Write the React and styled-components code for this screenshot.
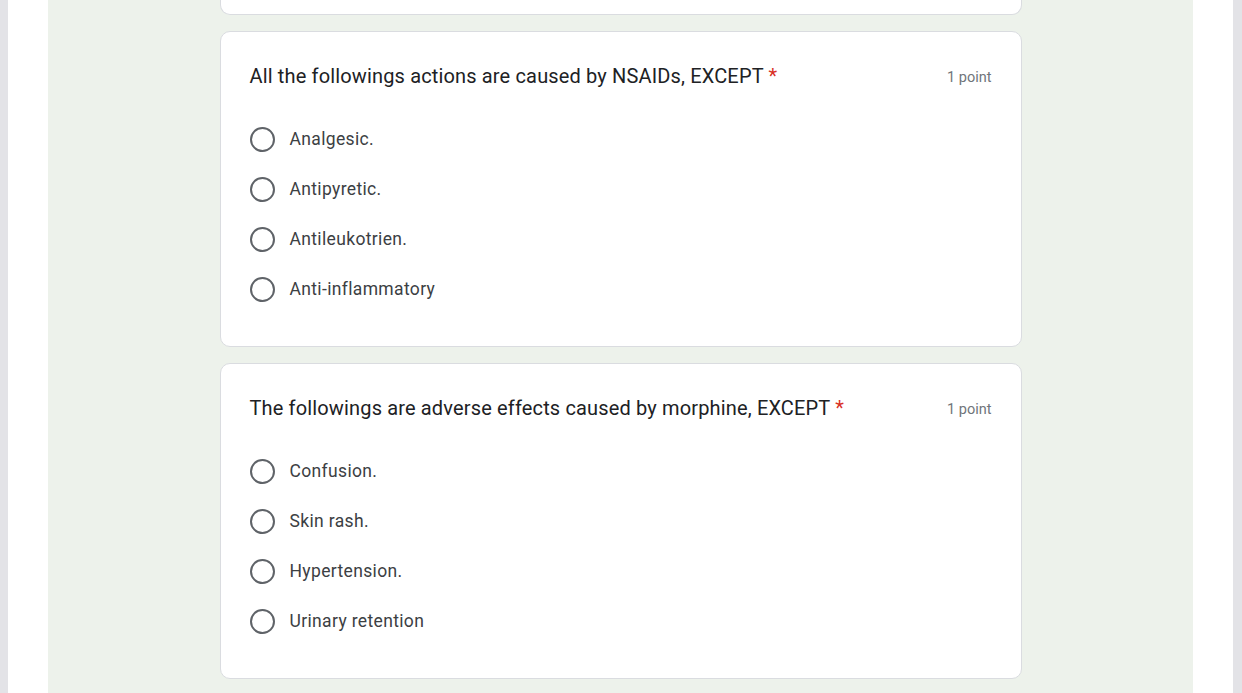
import React from "react";
import styled, { createGlobalStyle } from "styled-components";

const GlobalStyle = createGlobalStyle`
  html, body {
    margin: 0;
    padding: 0;
    height: 100%;
    overflow: hidden;
  }
  #root {
    height: 100%;
  }
`;

const questions = [
  {
    title: "All the followings actions are caused by NSAIDs, EXCEPT",
    points: "1 point",
    options: ["Analgesic.", "Antipyretic.", "Antileukotrien.", "Anti-inflammatory"],
  },
  {
    title: "The followings are adverse effects caused by morphine, EXCEPT",
    points: "1 point",
    options: ["Confusion.", "Skin rash.", "Hypertension.", "Urinary retention"],
  },
];

export default function App() {
  return (
    <>
      <GlobalStyle />
      <Page>
        <Edge />
        <Gutter />
        <Main>
          <CutCard />
          {questions.map((q) => (
            <Card key={q.title}>
              <Header>
                <Question>
                  {q.title} <Required>*</Required>
                </Question>
                <Points>{q.points}</Points>
              </Header>
              <Options>
                {q.options.map((opt) => (
                  <Option key={opt}>
                    <Radio />
                    <OptionLabel>{opt}</OptionLabel>
                  </Option>
                ))}
              </Options>
            </Card>
          ))}
        </Main>
        <Gutter />
        <Edge $right />
      </Page>
    </>
  );
}

const Page = styled.div`
  display: flex;
  height: 693px;
  background: #ffffff;
  overflow: hidden;
`;

const Edge = styled.div`
  width: ${(p) => (p.$right ? "9px" : "8px")};
  background: #e3e3e7;
  flex-shrink: 0;
`;

const Gutter = styled.div`
  width: 40px;
  flex-shrink: 0;
  background: #ffffff;
`;

const Main = styled.div`
  flex: 1;
  background: #edf2eb;
  display: flex;
  flex-direction: column;
  align-items: center;
  gap: 16px;
`;

const CutCard = styled.div`
  width: 802px;
  height: 15px;
  box-sizing: border-box;
  background: #ffffff;
  border: 1px solid #dadce0;
  border-top: none;
  border-radius: 0 0 10px 10px;
  flex-shrink: 0;
`;

const Card = styled.div`
  width: 802px;
  box-sizing: border-box;
  background: #ffffff;
  border: 1px solid #dadce0;
  border-radius: 10px;
  padding: 32px 29px 32px 29px;
  flex-shrink: 0;
`;

const Header = styled.div`
  display: flex;
  justify-content: space-between;
  align-items: center;
  height: 24px;
`;

const Question = styled.div`
  font-family: Roboto, "Liberation Sans", sans-serif;
  font-size: 20px;
  color: #202124;
  letter-spacing: 0.15px;
`;

const Required = styled.span`
  color: #d93025;
`;

const Points = styled.div`
  font-family: Roboto, "Liberation Sans", sans-serif;
  font-size: 14.5px;
  color: #70757a;
  padding-top: 3px;
`;

const Options = styled.div`
  display: flex;
  flex-direction: column;
  margin-top: 26px;
`;

const Option = styled.div`
  display: flex;
  align-items: center;
  height: 50px;
`;

const Radio = styled.span`
  width: 21px;
  height: 21px;
  border: 2.5px solid #5f6368;
  border-radius: 50%;
  margin-right: 15px;
  flex-shrink: 0;
`;

const OptionLabel = styled.span`
  font-family: Roboto, "Liberation Sans", sans-serif;
  font-size: 17.5px;
  color: #3c4043;
  letter-spacing: 0.35px;
`;
